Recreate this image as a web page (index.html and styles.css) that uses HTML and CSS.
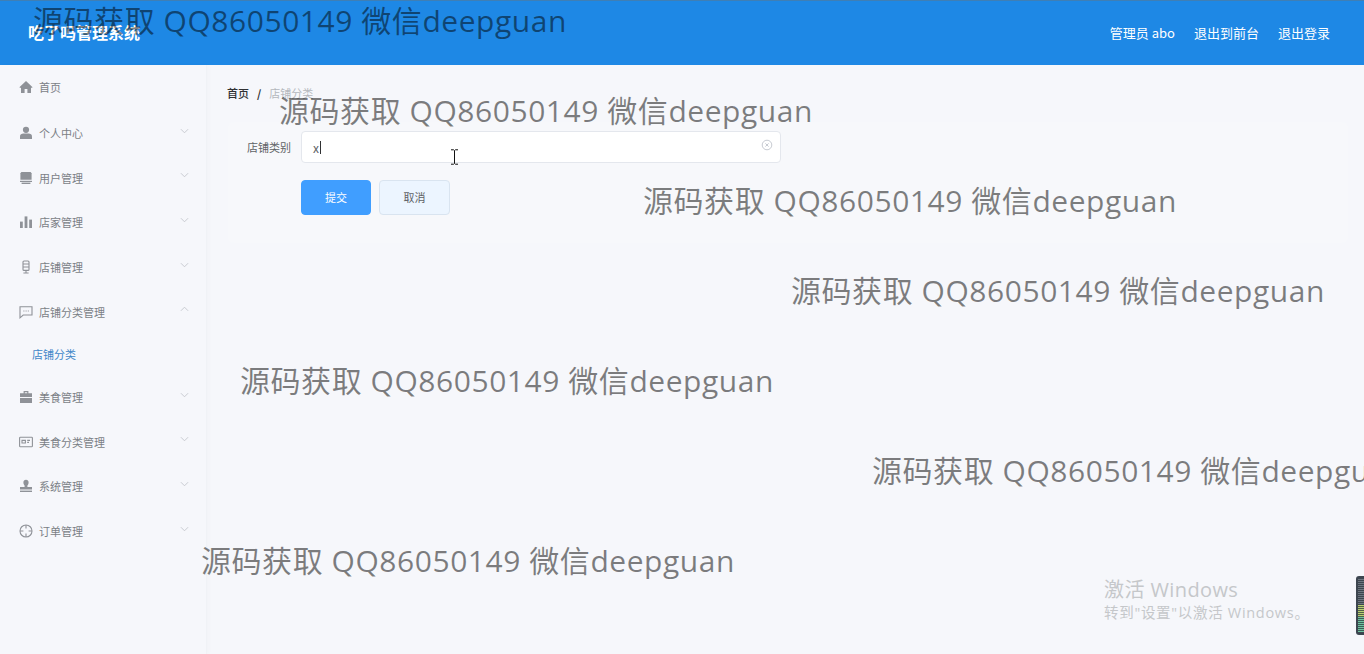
FILE: index.html
```html
<!DOCTYPE html>
<html lang="en">
<head>
<meta charset="UTF-8">
<meta name="viewport" content="width=device-width, initial-scale=1.0">
<title>店铺分类</title>
<link rel="stylesheet" href="styles.css">
</head>
<body>

<header class="topbar">
    <div class="brand">吃了吗管理系统</div>
    <nav class="top-links">
        <span>管理员 abo</span>
        <span>退出到前台</span>
        <span>退出登录</span>
    </nav>
</header>

<div class="layout">
    <aside class="sidebar">
        <div class="menu-item first">
            <svg class="menu-icon" viewBox="0 0 14 14"><path d="M7 1 0.4 7.2 1.3 8.1 2 7.5V13H5.6V9H8.4V13H12V7.5L12.7 8.1 13.6 7.2Z"/></svg>
            <span>首页</span>
        </div>
        <div class="menu-item">
            <svg class="menu-icon" viewBox="0 0 14 14"><circle cx="7" cy="3.8" r="3.1"/><path d="M1 13V10.4C1 8.6 2.6 7.6 4.4 7.6H9.6C11.4 7.6 13 8.6 13 10.4V13Z"/></svg>
            <span>个人中心</span>
            <svg class="chevron" viewBox="0 0 10 6"><path d="M1 1 5 5 9 1"/></svg>
        </div>
        <div class="menu-item">
            <svg class="menu-icon" viewBox="0 0 14 14"><path d="M2.4 1H11.6L12.6 2.2V8.8H1.4V2.2Z"/><path d="M1 9.8H13V11H1Z"/><path d="M2.6 11.6H11.4V13H2.6Z"/></svg>
            <span>用户管理</span>
            <svg class="chevron" viewBox="0 0 10 6"><path d="M1 1 5 5 9 1"/></svg>
        </div>
        <div class="menu-item">
            <svg class="menu-icon" viewBox="0 0 14 14"><path d="M1 6.6H3.8V13H1Z"/><path d="M5.6 1.4H8.4V13H5.6Z"/><path d="M10.2 4.6H13V13H10.2Z"/></svg>
            <span>店家管理</span>
            <svg class="chevron" viewBox="0 0 10 6"><path d="M1 1 5 5 9 1"/></svg>
        </div>
        <div class="menu-item">
            <svg class="menu-icon line" viewBox="0 0 14 14"><rect x="4" y="1" width="6" height="9.4" rx="1"/><path d="M4 4H10M4 7H10M7 10.4V12.8M4.4 13H9.6"/></svg>
            <span>店铺管理</span>
            <svg class="chevron" viewBox="0 0 10 6"><path d="M1 1 5 5 9 1"/></svg>
        </div>
        <div class="menu-item">
            <svg class="menu-icon line" viewBox="0 0 14 14"><path d="M1 1.8H13V10H4.2L1 12.8Z"/><path d="M4.4 6H5.4M6.6 6H7.6M8.8 6H9.8"/></svg>
            <span>店铺分类管理</span>
            <svg class="chevron" viewBox="0 0 10 6"><path d="M1 5 5 1 9 5"/></svg>
        </div>
        <div class="submenu-item">店铺分类</div>
        <div class="menu-item">
            <svg class="menu-icon" viewBox="0 0 14 14"><path d="M4.6 1H9.4V3.2H13V7H1V3.2H4.6ZM5.8 2.2V3.2H8.2V2.2Z"/><path d="M1 8H13V13H1Z"/></svg>
            <span>美食管理</span>
            <svg class="chevron" viewBox="0 0 10 6"><path d="M1 1 5 5 9 1"/></svg>
        </div>
        <div class="menu-item">
            <svg class="menu-icon line" viewBox="0 0 14 14"><rect x="0.6" y="2.2" width="12.8" height="9.6" rx="0.8"/><path d="M3 5.4H6.4V8H3ZM8.2 5.4H11M8.2 7.4H10"/></svg>
            <span>美食分类管理</span>
            <svg class="chevron" viewBox="0 0 10 6"><path d="M1 1 5 5 9 1"/></svg>
        </div>
        <div class="menu-item">
            <svg class="menu-icon" viewBox="0 0 14 14"><path d="M7 0.8C8.6 0.8 9.6 2 9.6 3.4 9.6 4.8 9 5.6 8.4 6.4V8H13V10.6H1V8H5.6V6.4C5 5.6 4.4 4.8 4.4 3.4 4.4 2 5.4 0.8 7 0.8Z"/><path d="M1 11.6H13V13H1Z"/></svg>
            <span>系统管理</span>
            <svg class="chevron" viewBox="0 0 10 6"><path d="M1 1 5 5 9 1"/></svg>
        </div>
        <div class="menu-item">
            <svg class="menu-icon line" viewBox="0 0 14 14"><circle cx="7" cy="7" r="6"/><path d="M7 1V4.4M7 9.6V13M1 7H4.4M9.6 7H13"/></svg>
            <span>订单管理</span>
            <svg class="chevron" viewBox="0 0 10 6"><path d="M1 1 5 5 9 1"/></svg>
        </div>
    </aside>

    <main class="content">
        <div class="breadcrumb">
            <span class="crumb-home">首页</span>
            <span class="crumb-sep">/</span>
            <span class="crumb-current">店铺分类</span>
        </div>

        <form class="form-card">
            <div class="form-row">
                <label class="form-label" for="category">店铺类别</label>
                <div class="input-box">
                    <span class="input-text">x</span><span class="caret"></span>
                    <svg class="clear-icon" viewBox="0 0 12 12"><circle cx="6" cy="6" r="4.8"/><path d="M4.4 4.4 7.6 7.6M7.6 4.4 4.4 7.6"/></svg>
                </div>
            </div>
            <div class="form-actions">
                <button type="button" class="btn btn-primary">提交</button>
                <button type="button" class="btn btn-plain">取消</button>
            </div>
        </form>
    </main>
</div>

<div class="watermark wm1">源码获取 QQ86050149 微信deepguan</div>
<div class="watermark wm2">源码获取 QQ86050149 微信deepguan</div>
<div class="watermark wm3">源码获取 QQ86050149 微信deepguan</div>
<div class="watermark wm4">源码获取 QQ86050149 微信deepguan</div>
<div class="watermark wm5">源码获取 QQ86050149 微信deepguan</div>
<div class="watermark wm6">源码获取 QQ86050149 微信deepguan</div>
<div class="watermark wm7">源码获取 QQ86050149 微信deepguan</div>

<svg class="ibeam" viewBox="0 0 9 16"><path d="M1 0.8H3.6L4.5 1.6 5.4 0.8H8M4.5 1.6V14.4M1 15.2H3.6L4.5 14.4 5.4 15.2H8"/></svg>

<div class="activate">
    <div class="activate-title">激活 Windows</div>
    <div class="activate-sub">转到"设置"以激活 Windows。</div>
</div>

<div class="tray-widget"><div class="tray-bars"></div></div>

</body>
</html>
```

FILE: styles.css
```css
body {
    margin: 0;
    height: 654px;
    overflow: hidden;
    position: relative;
    background-color: #f6f7fb;
    font-family: "Noto Sans CJK SC", "Noto Sans", sans-serif;
    color: #606266;
}
.topbar {
    height: 65px;
    box-sizing: border-box;
    border-top: 1px solid #3f7fb5;
    background-color: #1e88e5;
    display: flex;
    align-items: center;
    justify-content: space-between;
    padding: 0 34px 2px 28px;
    color: #fff;
}
.brand {
    font-size: 16px;
    font-weight: 700;
    line-height: 20px;
}
.top-links {
    display: flex;
    gap: 19px;
    font-size: 13px;
}
.layout {
    display: flex;
    height: 589px;
}
.sidebar {
    width: 207px;
    flex-shrink: 0;
    box-sizing: border-box;
    border-right: 1px solid #f0f2f6;
    box-shadow: 2px 0 4px rgba(0, 0, 0, 0.02);
}
.menu-item {
    height: 44.6px;
    display: flex;
    align-items: center;
    padding: 0 17px 0 19px;
    font-size: 11px;
    color: #7b7f86;
}
.menu-item.first {
    height: 44px;
    margin-bottom: 2px;
}
.menu-icon {
    width: 14px;
    height: 14px;
    flex-shrink: 0;
    margin-right: 6px;
    fill: #8f9298;
}
.menu-icon.line {
    fill: none;
    stroke: #8f9298;
    stroke-width: 1.1;
}
.chevron {
    width: 9px;
    height: 6px;
    margin-left: auto;
    margin-top: -5px;
    fill: none;
    stroke: #c3c6cc;
    stroke-width: 1;
}
.submenu-item {
    height: 41px;
    line-height: 40px;
    padding-left: 32px;
    font-size: 11px;
    color: #3f86c8;
}
.content {
    flex: 1;
    padding: 21px 16px 0 20px;
    min-width: 0;
}
.breadcrumb {
    display: flex;
    align-items: center;
    height: 14px;
    font-size: 11px;
}
.crumb-home {
    color: #303133;
    font-weight: 500;
}
.crumb-sep {
    color: #303133;
    margin: 0 8px;
    font-weight: 700;
}
.crumb-current {
    color: #b4b7bd;
}
.form-card {
    margin-top: 22px;
    margin-left: 1px;
    height: 121px;
    box-sizing: border-box;
    background-color: #f7f8fb;
    border-radius: 6px;
    padding: 9px 0 0 19px;
}
.form-row {
    display: flex;
    align-items: center;
}
.form-label {
    width: 54px;
    font-size: 11px;
    color: #606266;
    white-space: nowrap;
    padding-bottom: 1px;
}
.input-box {
    width: 480px;
    height: 32px;
    box-sizing: border-box;
    border: 1px solid #e4e7ed;
    border-radius: 4px;
    background-color: #fff;
    display: flex;
    align-items: center;
    padding: 0 7px 0 11px;
    font-size: 12px;
    color: #606266;
}
.caret {
    width: 1px;
    height: 13px;
    background-color: #303133;
    margin-left: 1px;
}
.clear-icon {
    width: 12px;
    height: 12px;
    margin-left: auto;
    margin-top: -4px;
    fill: none;
    stroke: #c0c4cc;
    stroke-width: 0.9;
}
.form-actions {
    display: flex;
    gap: 8px;
    margin: 17px 0 0 54px;
}
.btn {
    height: 35px;
    box-sizing: border-box;
    border-radius: 4px;
    font-family: inherit;
    font-size: 11px;
    padding: 0 0 2px;
    cursor: pointer;
}
.btn-primary {
    width: 70px;
    background-color: #409eff;
    border: 1px solid #409eff;
    color: #fff;
}
.btn-plain {
    width: 71px;
    background-color: #ecf5ff;
    border: 1px solid #d9e4f0;
    color: #606266;
}
.watermark {
    position: absolute;
    font-family: "Open Sans", "Noto Sans CJK SC", sans-serif;
    font-size: 30px;
    letter-spacing: 0.55px;
    line-height: 40px;
    color: rgba(0, 0, 0, 0.5);
    white-space: nowrap;
}
.wm1 { left: 33px; top: 1px; }
.wm2 { left: 279px; top: 91px; }
.wm3 { left: 643px; top: 181px; }
.wm4 { left: 791px; top: 271px; }
.wm5 { left: 240px; top: 361px; }
.wm6 { left: 872px; top: 451px; }
.wm7 { left: 201px; top: 541px; }
.ibeam {
    position: absolute;
    left: 450px;
    top: 149px;
    width: 9px;
    height: 16px;
    fill: none;
    stroke: #111;
    stroke-width: 1;
}
.activate {
    position: absolute;
    left: 1104px;
    top: 578px;
    font-family: "Open Sans", "Noto Sans CJK SC", sans-serif;
    color: #c5c7ca;
}
.activate-title {
    font-size: 20px;
    letter-spacing: 0.4px;
    line-height: 24px;
}
.activate-sub {
    font-size: 14.5px;
    letter-spacing: 0.7px;
    line-height: 22px;
}
.tray-widget {
    position: absolute;
    left: 1356px;
    top: 576px;
    width: 8px;
    height: 59px;
    background-color: #3d4650;
    border-radius: 3px 0 0 3px;
    box-sizing: border-box;
    padding: 3px 0 3px 2px;
}
.tray-bars {
    height: 100%;
    background:
        repeating-linear-gradient(transparent 0 1px, rgba(40, 48, 56, 0.7) 1px 2px),
        linear-gradient(#6d7680 0 50%, #b8cf72 50% 72%, #6fc3a0 72% 100%);
}
```
